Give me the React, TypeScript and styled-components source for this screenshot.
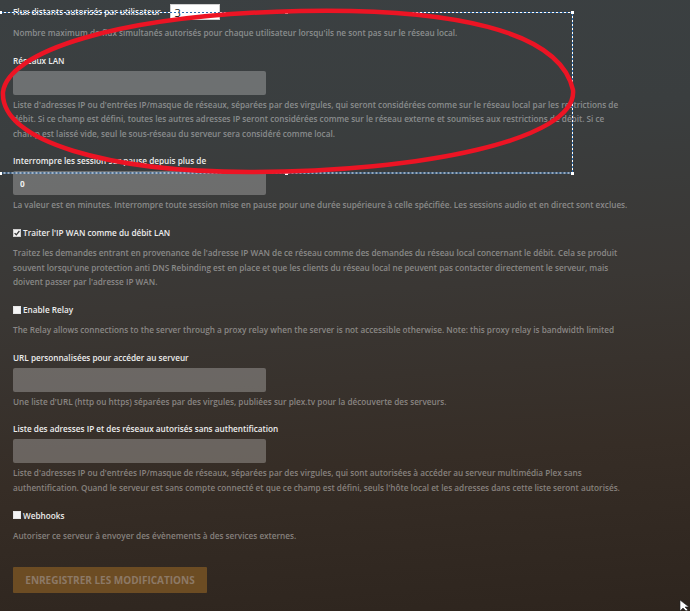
import React from 'react';
import styled, {createGlobalStyle} from 'styled-components';

const GlobalStyle = createGlobalStyle`
  html, body {
    margin: 0;
    padding: 0;
    background: #2f2720;
  }
`;

const Page = styled.div`
  position: relative;
  box-sizing: border-box;
  width: 690px;
  height: 611px;
  overflow: hidden;
  padding: 4px 13px 0;
  background: linear-gradient(176deg, #3b4042 0%, #3a3e3f 22%, #3a3734 48%, #362d26 74%, #2e251e 100%);
  font-family: 'Open Sans', 'Liberation Sans', sans-serif;
`;

const Group = styled.div`
  margin-bottom: 13px;
`;

const InlineRow = styled.div`
  display: flex;
  align-items: center;
  gap: 10px;
  height: 16px;
  margin-bottom: 6px;
`;

const Label = styled.div`
  font-size: 8.2px;
  line-height: 14px;
  font-weight: 600;
  color: #ededed;
  margin-bottom: 3px;

  ${InlineRow} & {
    margin-bottom: 0;
  }
`;

const SmallField = styled.input`
  box-sizing: border-box;
  width: 50px;
  height: 16px;
  margin: 0;
  padding: 0 3px;
  border: 1px solid #d0d0d0;
  background: #fff;
  color: #111;
  font-family: 'Open Sans', 'Liberation Sans', sans-serif;
  font-size: 11px;
  outline: none;
`;

const TextField = styled.input`
  display: block;
  box-sizing: border-box;
  width: 253px;
  height: 24px;
  margin: 0 0 3px;
  padding: 0 7px;
  border: none;
  border-radius: 2px;
  background: rgba(255, 255, 255, 0.26);
  color: #f0f0f0;
  font-family: 'Open Sans', 'Liberation Sans', sans-serif;
  font-size: 8.2px;
  font-weight: 700;
  outline: none;
`;

const Description = styled.div`
  font-size: 8.2px;
  line-height: 14.5px;
  font-weight: 600;
  color: rgba(255, 255, 255, 0.41);
  white-space: nowrap;
`;

const CheckRow = styled.div`
  display: flex;
  align-items: center;
  gap: 2px;
  height: 14px;
  margin-bottom: 6.5px;
  font-size: 8.2px;
  font-weight: 600;
  color: #ededed;
`;

const Box = styled.span<{$checked?: boolean}>`
  display: inline-flex;
  align-items: center;
  justify-content: center;
  box-sizing: border-box;
  width: 8px;
  height: 8px;
  background: #f4f4f4;
  border: 1px solid ${p => (p.$checked ? '#cfcfcf' : '#e6e6e6')};

  svg {
    display: block;
  }
`;

const SaveButton = styled.button`
  display: block;
  margin-top: 24px;
  width: 194px;
  height: 26px;
  padding: 0;
  border: none;
  border-radius: 1px;
  background: #6c4c23;
  color: #8c7966;
  font-family: 'Open Sans', 'Liberation Sans', sans-serif;
  font-size: 10px;
  font-weight: 700;
  text-transform: uppercase;
`;

const Overlay = styled.svg`
  position: absolute;
  left: 0;
  top: 0;
  pointer-events: none;
`;

function Check({checked}: {checked?: boolean}) {
  return (
    <Box $checked={checked}>
      {checked && (
        <svg width="6" height="6" viewBox="0 0 6 6">
          <path d="M0.6 3.1 L2.3 4.8 L5.4 1" fill="none" stroke="#3a3a3a" strokeWidth="1.3" />
        </svg>
      )}
    </Box>
  );
}

function Annotations() {
  const handles = [
    [0, 12],
    [286, 12],
    [572, 12],
    [572, 92],
    [572, 173],
    [286, 173],
    [0, 173],
  ];
  return (
    <Overlay width="690" height="611" viewBox="0 0 690 611">
      <rect x="-20" y="12.5" width="592.5" height="160.5" fill="none" stroke="#2d6db0" strokeWidth="1" />
      <rect x="-20" y="12.5" width="592.5" height="160.5" fill="none" stroke="#ffffff" strokeWidth="1" strokeDasharray="2 2" />
      {handles.map(([x, y]) => (
        <rect key={`${x}-${y}`} x={x - 1} y={y - 1} width="3" height="3" fill="#ffffff" />
      ))}
      <path
        d="M 3 92 C 8 52, 115 15, 300 11 C 450 8, 560 30, 573 90 C 578 140, 420 172, 250 172 C 110 172, 0 142, 3 92 Z"
        fill="none"
        stroke="#ec1424"
        strokeWidth="4.5"
      />
      <path d="M680 600 L680 611 L683 608 L686 611 L688 610 L685 607 L689 607 Z" fill="#ffffff" stroke="#222" strokeWidth="0.6" />
    </Overlay>
  );
}

export default function App() {
  return (
    <>
      <GlobalStyle />
      <Page>
        <Group>
          <InlineRow>
            <Label>Flux distants autorisés par utilisateur</Label>
            <SmallField readOnly value="3" />
          </InlineRow>
          <Description>
            Nombre maximum de flux simultanés autorisés pour chaque utilisateur lorsqu'ils ne sont pas sur le réseau local.
          </Description>
        </Group>

        <Group>
          <Label>Réseaux LAN</Label>
          <TextField readOnly value="" />
          <Description>
            Liste d'adresses IP ou d'entrées IP/masque de réseaux, séparées par des virgules, qui seront considérées comme sur le réseau local par les restrictions de
            <br />
            débit. Si ce champ est défini, toutes les autres adresses IP seront considérées comme sur le réseau externe et soumises aux restrictions de débit. Si ce
            <br />
            champ est laissé vide, seul le sous-réseau du serveur sera considéré comme local.
          </Description>
        </Group>

        <Group>
          <Label>Interrompre les session sur pause depuis plus de</Label>
          <TextField readOnly value="0" />
          <Description>
            La valeur est en minutes. Interrompre toute session mise en pause pour une durée supérieure à celle spécifiée. Les sessions audio et en direct sont exclues.
          </Description>
        </Group>

        <Group>
          <CheckRow>
            <Check checked />
            Traiter l'IP WAN comme du débit LAN
          </CheckRow>
          <Description>
            Traitez les demandes entrant en provenance de l'adresse IP WAN de ce réseau comme des demandes du réseau local concernant le débit. Cela se produit
            <br />
            souvent lorsqu'une protection anti DNS Rebinding est en place et que les clients du réseau local ne peuvent pas contacter directement le serveur, mais
            <br />
            doivent passer par l'adresse IP WAN.
          </Description>
        </Group>

        <Group>
          <CheckRow>
            <Check />
            Enable Relay
          </CheckRow>
          <Description>
            The Relay allows connections to the server through a proxy relay when the server is not accessible otherwise. Note: this proxy relay is bandwidth limited
          </Description>
        </Group>

        <Group>
          <Label>URL personnalisées pour accéder au serveur</Label>
          <TextField readOnly value="" />
          <Description>
            Une liste d'URL (http ou https) séparées par des virgules, publiées sur plex.tv pour la découverte des serveurs.
          </Description>
        </Group>

        <Group>
          <Label>Liste des adresses IP et des réseaux autorisés sans authentification</Label>
          <TextField readOnly value="" />
          <Description>
            Liste d'adresses IP ou d'entrées IP/masque de réseaux, séparées par des virgules, qui sont autorisées à accéder au serveur multimédia Plex sans
            <br />
            authentification. Quand le serveur est sans compte connecté et que ce champ est défini, seuls l'hôte local et les adresses dans cette liste seront autorisés.
          </Description>
        </Group>

        <Group>
          <CheckRow>
            <Check />
            Webhooks
          </CheckRow>
          <Description>Autoriser ce serveur à envoyer des évènements à des services externes.</Description>
        </Group>

        <SaveButton>Enregistrer les modifications</SaveButton>
        <Annotations />
      </Page>
    </>
  );
}
